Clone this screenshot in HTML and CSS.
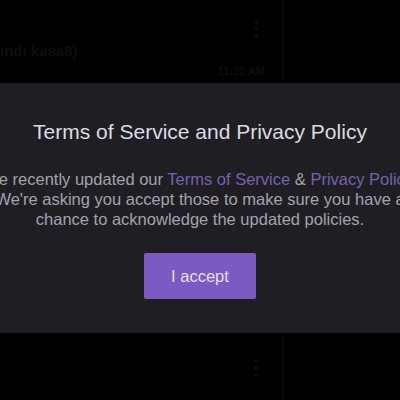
FILE: index.html
```html
<!DOCTYPE html>
<html lang="en">
<head>
    <title>Terms of Service</title>
    <meta charset="utf-8">
    <meta name="viewport" content="width=device-width, initial-scale=1">
    <link rel="stylesheet" href="styles.css">
</head>
<body>
    <div class="page">
        <div class="chat">
            <div class="message">
                <span class="message-text">Sindi kasa8)</span>
                <span class="message-menu">&#8942;</span>
            </div>
            <div class="message-time">11:21 AM</div>
            <div class="message lower">
                <span class="message-menu">&#8942;</span>
            </div>
        </div>
        <div class="sidebar"></div>
    </div>

    <div class="backdrop">
        <div class="modal">
            <h1 class="modal-title">Terms of Service and Privacy Policy</h1>
            <p class="modal-text">
                <span class="first-line">We recently updated our <a href="#">Terms of Service</a> &amp; <a href="#">Privacy Policy</a>.</span><br>
                We're asking you accept those to make sure you have a chance to acknowledge the updated policies.
            </p>
            <button type="button" class="accept-btn">I accept</button>
        </div>
    </div>
</body>
</html>
```

FILE: styles.css
```css
body {
    font-family: 'Liberation Sans', Arial, sans-serif;
    background-color: #000;
    margin: 0;
    padding: 0;
    width: 400px;
    height: 400px;
    overflow: hidden;
}

.page {
    display: flex;
    height: 400px;
    color: #0e0e0e;
}

.chat {
    width: 282px;
    display: flex;
    flex-direction: column;
}

.message {
    display: flex;
    justify-content: space-between;
    align-items: flex-start;
    padding: 16px 16px 0 0;
    font-size: 15px;
    font-weight: bold;
}

.message-text {
    margin-top: 26px;
    margin-left: -10px;
}

.message-menu {
    font-size: 20px;
    color: #0f0f0f;
}

.message-time {
    text-align: right;
    padding-right: 17px;
    font-size: 11px;
    font-weight: bold;
    margin-top: 6px;
}

.message.lower {
    justify-content: flex-end;
    margin-top: 262px;
}

.sidebar {
    flex: 1;
    border-left: 1px solid #090909;
}

.backdrop {
    position: fixed;
    inset: 0;
    display: flex;
    align-items: flex-start;
    padding-top: 83px;
}

.modal {
    width: 400px;
    height: 250px;
    box-sizing: border-box;
    background-color: #1f1f23;
    padding-top: 37px;
    display: flex;
    flex-direction: column;
    align-items: center;
    overflow: hidden;
}

.modal-title {
    margin: 0;
    font-size: 21px;
    line-height: 24px;
    font-weight: normal;
    color: #dcdce0;
    white-space: nowrap;
}

.modal-text {
    width: 440px;
    flex-shrink: 0;
    margin: 25px 0 0;
    font-size: 16.5px;
    line-height: 20px;
    text-align: center;
    color: #a3a3ab;
}

.first-line {
    white-space: nowrap;
}

.modal-text a {
    color: #7862ac;
    text-decoration: none;
}

.accept-btn {
    margin-top: 24px;
    width: 112px;
    height: 46px;
    background-color: #7b5bc2;
    color: #e6ddf7;
    border: none;
    border-radius: 2px;
    font-family: inherit;
    font-size: 16.5px;
}
```
